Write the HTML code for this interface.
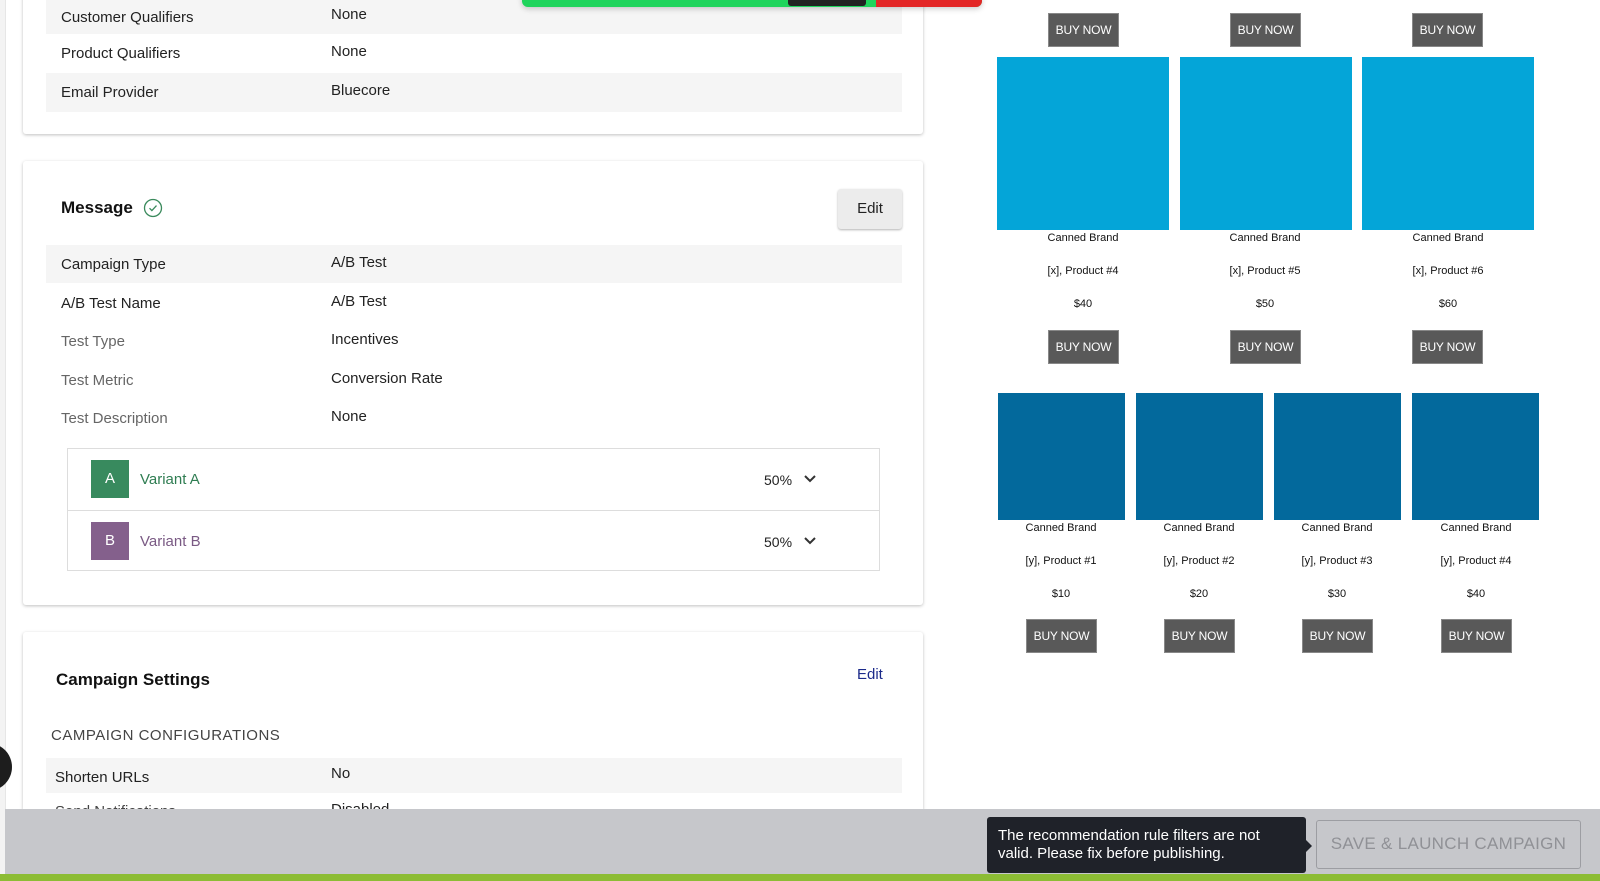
<!DOCTYPE html>
<html><head><meta charset="utf-8"><style>
*{margin:0;padding:0;box-sizing:border-box}
html,body{width:1600px;height:881px;overflow:hidden}
body{position:relative;background:#fff;font-family:"Liberation Sans",sans-serif;color:#222}
.a{position:absolute}
.card{position:absolute;left:23px;width:900px;background:#fff;border-radius:3px;box-shadow:0 1px 3px rgba(0,0,0,.25)}
.row{position:absolute;left:46px;width:856px;height:38px;font-size:15px}
.row.g{background:#f5f5f5}
.row .l{position:absolute;left:15px;top:11px;color:#222}
.row .l.m{color:#666}
.row .v{position:absolute;left:285px;top:9px;color:#222}
.bn{position:absolute;width:71px;height:34px;background:#595959;border:1px solid #888;color:#fff;font-size:12px;text-align:center;line-height:32px;letter-spacing:-.2px}
.t{position:absolute;font-size:11px;color:#111;text-align:center;width:170px}
</style></head><body>
<div class="a" style="left:0;top:0;width:5px;height:881px;background:#f3f3f3"></div>
<div class="a" style="left:5px;top:0;width:1px;height:881px;background:#e6e6e6"></div>

<!-- card 1 -->
<div class="card" style="top:-10px;height:144px"></div>
<div class="row g" style="top:0;height:34px"><span class="l" style="top:9px">Customer Qualifiers</span><span class="v" style="top:6px">None</span></div>
<div class="row" style="top:34px"><span class="l">Product Qualifiers</span><span class="v">None</span></div>
<div class="row g" style="top:73px;height:39px"><span class="l">Email Provider</span><span class="v">Bluecore</span></div>

<!-- card 2 -->
<div class="card" style="top:161px;height:444px"></div>
<div class="a" style="left:61px;top:198px;font-size:17px;font-weight:bold;color:#111">Message</div>
<svg class="a" style="left:143px;top:198px" width="20" height="20" viewBox="0 0 20 20"><circle cx="10" cy="10" r="8.5" fill="none" stroke="#3a8a5c" stroke-width="1.3"/><path d="M6.5 10.2l2.4 2.4 4.6-5" fill="none" stroke="#3a8a5c" stroke-width="1.3"/></svg>
<div class="a" style="left:838px;top:189px;width:64px;height:40px;background:#ececec;border-radius:3px;box-shadow:0 1px 2px rgba(0,0,0,.3);font-size:15px;text-align:center;line-height:40px;color:#222">Edit</div>
<div class="row g" style="top:245px"><span class="l">Campaign Type</span><span class="v">A/B Test</span></div>
<div class="row" style="top:284px"><span class="l">A/B Test Name</span><span class="v">A/B Test</span></div>
<div class="row" style="top:322px"><span class="l m">Test Type</span><span class="v">Incentives</span></div>
<div class="row" style="top:361px"><span class="l m">Test Metric</span><span class="v">Conversion Rate</span></div>
<div class="row" style="top:399px"><span class="l m">Test Description</span><span class="v">None</span></div>
<div class="a" style="left:67px;top:448px;width:813px;height:123px;border:1px solid #ddd"></div>
<div class="a" style="left:67px;top:510px;width:813px;height:1px;background:#ddd"></div>
<div class="a" style="left:91px;top:460px;width:38px;height:38px;background:#388a5e;color:#fff;font-size:15px;text-align:center;line-height:38px">A</div>
<div class="a" style="left:140px;top:471px;font-size:15px;color:#2f7d52">Variant A</div>
<div class="a" style="left:91px;top:522px;width:38px;height:38px;background:#84608c;color:#fff;font-size:15px;text-align:center;line-height:38px">B</div>
<div class="a" style="left:140px;top:533px;font-size:15px;color:#7a5a84">Variant B</div>
<div class="a" style="left:764px;top:472px;font-size:14px">50%</div>
<div class="a" style="left:764px;top:534px;font-size:14px">50%</div>
<svg class="a" style="left:803px;top:474px" width="14" height="10"><path d="M2 2l5 5 5-5" fill="none" stroke="#333" stroke-width="2"/></svg>
<svg class="a" style="left:803px;top:536px" width="14" height="10"><path d="M2 2l5 5 5-5" fill="none" stroke="#333" stroke-width="2"/></svg>

<!-- card 3 -->
<div class="card" style="top:632px;height:180px"></div>
<div class="a" style="left:56px;top:670px;font-size:17px;font-weight:bold;color:#111">Campaign Settings</div>
<div class="a" style="left:857px;top:666px;font-size:15px;color:#1b2a8a">Edit</div>
<div class="a" style="left:51px;top:727px;font-size:15px;color:#444;letter-spacing:.5px">CAMPAIGN CONFIGURATIONS</div>
<div class="row g" style="top:758px;height:35px"><span class="l" style="left:9px;top:11px">Shorten URLs</span><span class="v" style="left:285px;top:7px">No</span></div>
<div class="a" style="left:55px;top:803px;font-size:15px;color:#444">Send Notifications</div>
<div class="a" style="left:331px;top:801px;font-size:15px;color:#222">Disabled</div>
<div class="a" style="left:-36px;top:743px;width:48px;height:48px;border-radius:50%;background:#1d1d1d"></div>

<!-- top overlay -->
<div class="a" style="left:522px;top:-6px;width:460px;height:13px;border-radius:0 0 6px 6px;background:#1fd45c;box-shadow:0 2px 6px rgba(0,0,0,.2)"></div>
<div class="a" style="left:876px;top:-6px;width:106px;height:13px;border-radius:0 0 6px 0;background:#e32626"></div>
<div class="a" style="left:788px;top:-6px;width:78px;height:12px;border-radius:0 0 3px 3px;background:#222"></div>

<!-- right: products -->
<div class="bn" style="left:1048px;top:13px">BUY NOW</div>
<div class="bn" style="left:1230px;top:13px">BUY NOW</div>
<div class="bn" style="left:1412px;top:13px">BUY NOW</div>
<div class="a" style="left:997px;top:57px;width:172px;height:173px;background:#04a5d8"></div>
<div class="a" style="left:1180px;top:57px;width:172px;height:173px;background:#04a5d8"></div>
<div class="a" style="left:1362px;top:57px;width:172px;height:173px;background:#04a5d8"></div>
<div class="t" style="left:998px;top:232px">Canned Brand</div>
<div class="t" style="left:1180px;top:232px">Canned Brand</div>
<div class="t" style="left:1363px;top:232px">Canned Brand</div>
<div class="t" style="left:998px;top:265px">[x], Product #4</div>
<div class="t" style="left:1180px;top:265px">[x], Product #5</div>
<div class="t" style="left:1363px;top:265px">[x], Product #6</div>
<div class="t" style="left:998px;top:298px">$40</div>
<div class="t" style="left:1180px;top:298px">$50</div>
<div class="t" style="left:1363px;top:298px">$60</div>
<div class="bn" style="left:1048px;top:330px">BUY NOW</div>
<div class="bn" style="left:1230px;top:330px">BUY NOW</div>
<div class="bn" style="left:1412px;top:330px">BUY NOW</div>

<div class="a" style="left:998px;top:393px;width:127px;height:127px;background:#03699c"></div>
<div class="a" style="left:1136px;top:393px;width:127px;height:127px;background:#03699c"></div>
<div class="a" style="left:1274px;top:393px;width:127px;height:127px;background:#03699c"></div>
<div class="a" style="left:1412px;top:393px;width:127px;height:127px;background:#03699c"></div>
<div class="t" style="left:976px;top:522px">Canned Brand</div>
<div class="t" style="left:1114px;top:522px">Canned Brand</div>
<div class="t" style="left:1252px;top:522px">Canned Brand</div>
<div class="t" style="left:1391px;top:522px">Canned Brand</div>
<div class="t" style="left:976px;top:555px">[y], Product #1</div>
<div class="t" style="left:1114px;top:555px">[y], Product #2</div>
<div class="t" style="left:1252px;top:555px">[y], Product #3</div>
<div class="t" style="left:1391px;top:555px">[y], Product #4</div>
<div class="t" style="left:976px;top:588px">$10</div>
<div class="t" style="left:1114px;top:588px">$20</div>
<div class="t" style="left:1252px;top:588px">$30</div>
<div class="t" style="left:1391px;top:588px">$40</div>
<div class="bn" style="left:1026px;top:619px">BUY NOW</div>
<div class="bn" style="left:1164px;top:619px">BUY NOW</div>
<div class="bn" style="left:1302px;top:619px">BUY NOW</div>
<div class="bn" style="left:1441px;top:619px">BUY NOW</div>

<!-- footer -->
<div class="a" style="left:5px;top:809px;width:1595px;height:65px;background:#c6c7cb"></div>
<div class="a" style="left:0;top:874px;width:1600px;height:7px;background:#8cbc34"></div>
<div class="a" style="left:987px;top:817px;width:319px;height:56px;background:#1f2229;border-radius:3px;color:#fff;font-size:15px;line-height:18px;padding:10px 40px 0 11px">The recommendation rule filters are not valid. Please fix before publishing.</div>
<div class="a" style="left:1306px;top:840px;width:0;height:0;border-top:6px solid transparent;border-bottom:6px solid transparent;border-left:6px solid #1f2229"></div>
<div class="a" style="left:1316px;top:820px;width:265px;height:49px;border:1.5px solid #9c9da2;border-radius:3px;color:#909196;font-size:17px;text-align:center;line-height:46px;letter-spacing:.3px">SAVE &amp; LAUNCH CAMPAIGN</div>
</body></html>
